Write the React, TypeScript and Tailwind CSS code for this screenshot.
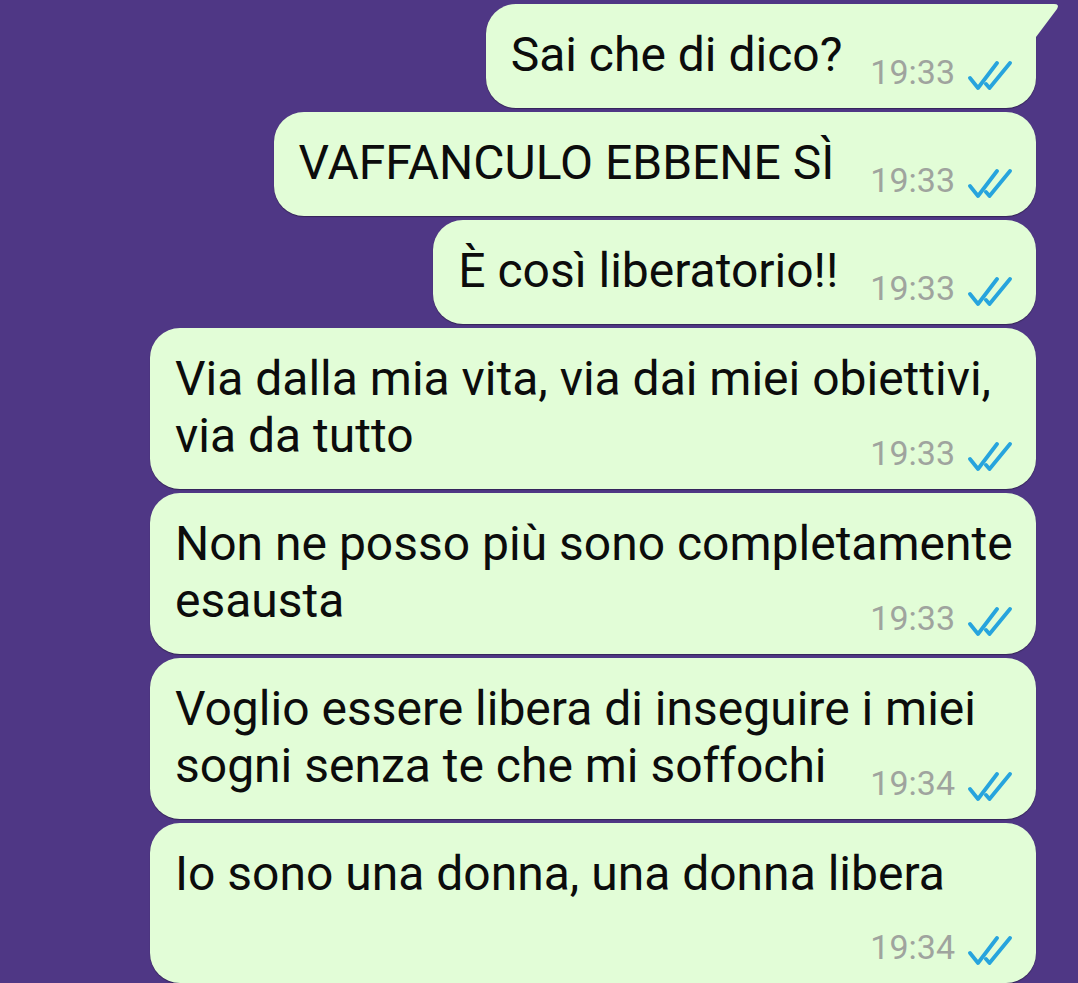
import React from 'react';

interface Message {
  lines: string[];
  time: string;
  tail?: boolean;
  wide?: boolean;
  timeBelow?: boolean;
  gap?: string;
}

const messages: Message[] = [
  { lines: ['Sai che di dico?'], time: '19:33', tail: true, gap: 'gap-[28px]' },
  { lines: ['VAFFANCULO EBBENE SÌ'], time: '19:33', gap: 'gap-[36px]' },
  { lines: ['È così liberatorio!!'], time: '19:33' },
  { lines: ['Via dalla mia vita, via dai miei obiettivi,', 'via da tutto'], time: '19:33', wide: true },
  { lines: ['Non ne posso più sono completamente', 'esausta'], time: '19:33', wide: true },
  { lines: ['Voglio essere libera di inseguire i miei', 'sogni senza te che mi soffochi'], time: '19:34', wide: true },
  { lines: ['Io sono una donna, una donna libera'], time: '19:34', wide: true, timeBelow: true },
];

const DoubleCheck = () => (
  <svg width="44" height="29" viewBox="0 0 44 29" className="ml-[13px] inline" fill="none">
    <path d="M2 17 L10 27 L29 2" stroke="#27a4dd" strokeWidth="3.8" strokeLinecap="round" strokeLinejoin="round" />
    <path d="M18 23 L21.5 27 L42 2" stroke="#27a4dd" strokeWidth="3.8" strokeLinecap="round" strokeLinejoin="round" />
  </svg>
);

const Time = ({ time, className }: { time: string; className: string }) => (
  <div className={`shrink-0 whitespace-nowrap text-[34px] leading-[38px] text-[#9fa49e] ${className}`}>
    <span>{time}</span>
    <DoubleCheck />
  </div>
);

const Bubble = ({ msg }: { msg: Message }) => {
  const text = (
    <p className="whitespace-nowrap text-[48px] leading-[57px] text-[#0c0c0c]">
      {msg.lines.map((line, i) => (
        <React.Fragment key={i}>
          {i > 0 && <br />}
          {line}
        </React.Fragment>
      ))}
    </p>
  );

  if (msg.wide) {
    return (
      <div className="flex w-[886px] flex-col rounded-[30px] bg-[#e2fdd7] pl-[25px] pr-[24px] pt-[22px] pb-[17px] shadow-[0_1px_1px_rgba(0,0,0,0.35)]">
        {text}
        <Time time={msg.time} className={msg.timeBelow ? 'self-end mt-[26px]' : 'self-end -mt-[30px]'} />
      </div>
    );
  }

  return (
    <div
      className={`relative flex items-start rounded-[30px] bg-[#e2fdd7] pl-[25px] pr-[24px] pt-[22px] pb-[17px] shadow-[0_1px_1px_rgba(0,0,0,0.35)] ${
        msg.gap ?? 'gap-[32px]'
      } ${msg.tail ? 'rounded-tr-none' : ''}`}
    >
      {text}
      <Time time={msg.time} className="mt-[27px]" />
      {msg.tail && (
        <svg width="24" height="34" viewBox="0 0 24 34" className="absolute left-full top-0">
          <path d="M0 0 H18 Q24 0 21 5 L0 33 Z" fill="#e2fdd7" />
        </svg>
      )}
    </div>
  );
};

export default function App() {
  return (
    <div className="h-[983px] overflow-hidden bg-[#4f3785] font-['Roboto',sans-serif]">
      <div className="flex flex-col items-end gap-[4px] pt-[4px] pr-[42px]">
        {messages.map((m, i) => (
          <Bubble key={i} msg={m} />
        ))}
      </div>
    </div>
  );
}
